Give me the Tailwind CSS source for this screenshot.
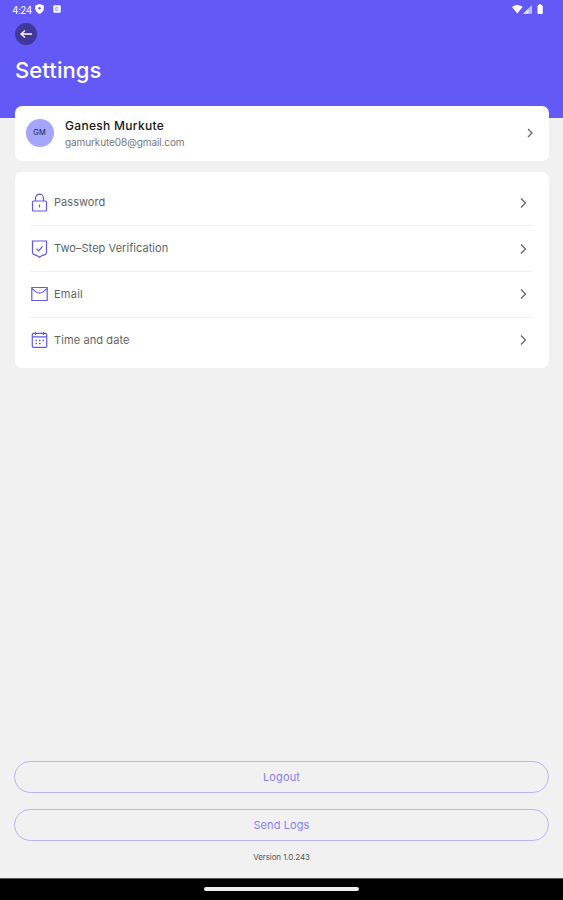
<!DOCTYPE html>
<html lang="en">
<head>
<meta charset="utf-8">
<title>Settings</title>
<script src="https://cdn.jsdelivr.net/npm/@tailwindcss/browser@4"></script>
</head>
<body class="w-[563px] h-[900px] overflow-hidden bg-[#f1f1f1] font-['Inter','Liberation_Sans',sans-serif] flex flex-col">
<header class="h-[118px] shrink-0 bg-[#6359f6] text-white">
  <div class="h-[18px] pl-3 pr-[18px] flex items-center">
    <span class="text-[10px] leading-none w-[23px] tracking-[-0.5px] pt-px">4:24</span>
    <svg class="w-[9px] h-[10px]" viewBox="0 0 9 10"><path d="M4.5 0 8.8 1.5V4.6C8.8 7 6.8 9.2 4.5 10 2.2 9.2.2 7 .2 4.6V1.5Z" fill="white"/><circle cx="4.5" cy="4.3" r="1.2" fill="#6359f6"/></svg>
    <svg class="w-2 h-2 ml-[9px]" viewBox="0 0 8 8"><rect x=".3" y=".3" width="7.4" height="7.4" rx="1" fill="white"/><path d="M2.7 2.3h2.8M2.7 4h2.8M2.7 5.7h2.8M2.7 2.3v3.4" stroke="#6359f6" stroke-width=".8" opacity=".65"/></svg>
    <svg class="w-[35px] h-3 ml-auto" viewBox="0 0 35 12"><path d="M2 4C5 1.200 9.600 1.200 12.600 4L7.300 10.500Z" fill="white"/><path d="M13.200 10.800 22 2V10.800Z" fill="white" opacity=".6"/><path d="M13.200 10.800 18.500 5.500V10.800Z" fill="white" opacity=".6"/><path d="M28 2.800h1V1.800h2V2.800h1.200V10.500H28Z" fill="white" stroke="white" stroke-width="1" stroke-linejoin="round"/></svg>
  </div>
  <div class="ml-[15px] mt-[5px] w-[22px] h-[22px] rounded-full bg-[#40389b] flex items-center justify-center">
    <svg class="w-[14px] h-3" viewBox="0 0 14 12" fill="none" stroke="white" stroke-width="1.4" stroke-linecap="round" stroke-linejoin="round"><path d="M12.500 6H2M5.500 3 2 6l3.500 3"/></svg>
  </div>
  <h1 class="ml-[15px] mt-[11px] text-[22px] leading-[28px] font-medium tracking-[0.1px]">Settings</h1>
</header>
<main class="mx-[14.500px] -mt-[12.500px] flex flex-col gap-[11.500px]">
  <section class="h-[55px] rounded-[7px] bg-white pl-[11px] pr-[15px] flex items-center">
    <div class="w-[28px] h-[28px] rounded-full bg-[#a3a6fb] flex items-center justify-center text-[7.500px] text-[#20223f]">GM</div>
    <div class="ml-[11.500px] flex-1 pt-px">
      <div class="text-[12px] leading-[16px] font-medium text-[#171717]"><span class="tracking-[0.300px]">Ganesh Murkute</span></div>
      <div class="text-[10px] leading-[16px] text-[#777]"><span class="tracking-[-0.1px]">gamurkute08@gmail.com</span></div>
    </div>
    <svg class="w-2 h-3" viewBox="0 0 8 12" fill="none" stroke="#666" stroke-width="1.300"><path d="m2 2 4 4-4 4"/></svg>
  </section>
  <section class="h-[196px] rounded-[7px] bg-white px-[16.500px] pt-[8px] divide-y divide-[#eeeeee] text-[11px] text-[#636363]">
    <div class="h-[46px] flex items-center pr-[5px]">
      <svg class="w-[17px] h-5" viewBox="0 0 17 20" fill="none" stroke="#6359e5" stroke-width="1.200"><rect x="1.500" y="8" width="14" height="10" rx="1"/><path d="M4.500 8V5.200a4 4 0 0 1 8 0V8M8.500 11.500v3"/></svg>
      <span class="ml-[6px] flex-1 tracking-[0.05px]">Password</span>
      <svg class="w-2 h-3" viewBox="0 0 8 12" fill="none" stroke="#666" stroke-width="1.300"><path d="m2 1.500 4.500 4.500L2 10.500"/></svg>
    </div>
    <div class="h-[46px] flex items-center pr-[5px]">
      <svg class="w-[17px] h-5" viewBox="0 0 17 20" fill="none" stroke="#6359e5" stroke-width="1.200"><path d="M1.500 2h14v11.500c0 1.200-.6 1.800-1.700 2.100-2.200.6-3.800 1.300-5.300 2.700-1.500-1.400-3.100-2.100-5.300-2.700-1.100-.3-1.700-.9-1.700-2.100Z"/><path d="m5.500 9.800 2.200 2L11.500 7.300"/></svg>
      <span class="ml-[6px] flex-1 tracking-[0.05px]">Two–Step Verification</span>
      <svg class="w-2 h-3" viewBox="0 0 8 12" fill="none" stroke="#666" stroke-width="1.300"><path d="m2 1.500 4.500 4.500L2 10.500"/></svg>
    </div>
    <div class="h-[45.500px] flex items-center pr-[5px]">
      <svg class="w-[17px] h-5" viewBox="0 0 17 20" fill="none" stroke="#6359e5" stroke-width="1.200"><path d="M.8 3.500h15.400v13H.8Z"/><path d="m.8 4.500 4.700 3.600q3 2 6 0l4.700-3.600" stroke-width="1.100"/></svg>
      <span class="ml-[6px] flex-1 tracking-[0.250px]">Email</span>
      <svg class="w-2 h-3" viewBox="0 0 8 12" fill="none" stroke="#666" stroke-width="1.300"><path d="m2 1.500 4.500 4.500L2 10.500"/></svg>
    </div>
    <div class="h-[45.500px] flex items-center pr-[5px]">
      <svg class="w-[17px] h-5" viewBox="0 0 17 20" fill="none" stroke="#6359e5" stroke-width="1.200"><rect x="1.300" y="3.300" width="14.400" height="14" rx="1"/><path d="M1.300 6.800h14.400M4.500 2v3M12.500 2v3"/><path d="M4.500 10.500h1.500M8 10.500h1.500M11.500 10.500H13M4.500 13.500h1.500M8 13.500h1.500" stroke-width="1.500"/></svg>
      <span class="ml-[6px] flex-1 tracking-[0.1px]">Time and date</span>
      <svg class="w-2 h-3" viewBox="0 0 8 12" fill="none" stroke="#666" stroke-width="1.300"><path d="m2 1.500 4.500 4.500L2 10.500"/></svg>
    </div>
  </section>
</main>
<footer class="mt-auto shrink-0">
  <div class="mx-[14px] flex flex-col gap-4 text-[11px] text-[#877ff0]">
    <button class="h-8 rounded-full border border-[#bdb7ef] tracking-[0.150px]">Logout</button>
    <button class="h-8 rounded-full border border-[#bdb7ef] tracking-[0.1px]">Send Logs</button>
  </div>
  <p class="mt-[9px] h-[28px] text-center text-[8px] leading-[15px] text-[#555] tracking-[-0.1px]">Version 1.0.243</p>
  <div class="h-[22px] bg-black border-t border-[#555] flex justify-center pt-[8px]"><div class="w-[155px] h-1 rounded-full bg-[#eee]"></div></div>
</footer>
</body>
</html>
